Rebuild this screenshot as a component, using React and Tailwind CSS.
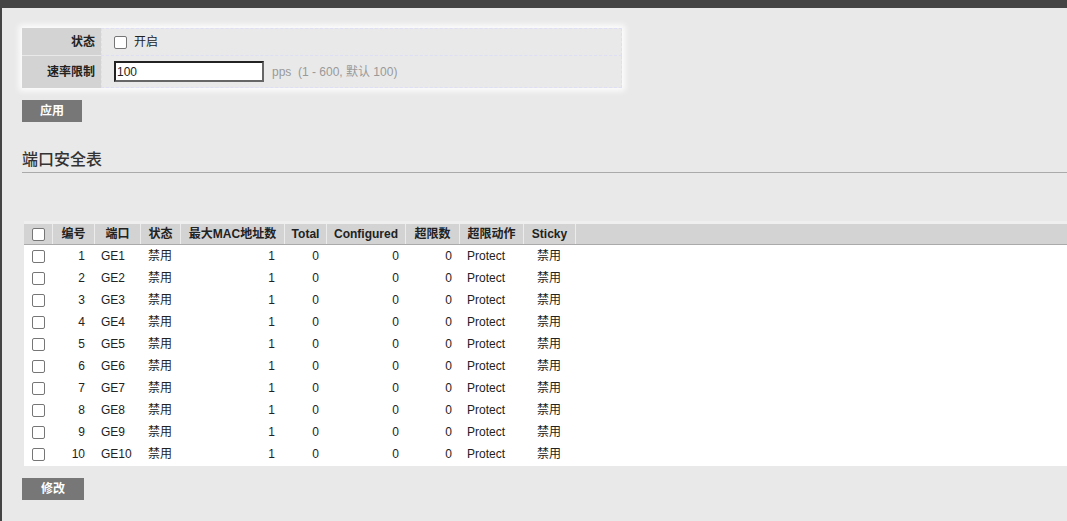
const ROWS = Array.from({ length: 10 }, (_, i) => i + 1);

const COLS = [
  { key: 'chk', w: 'w-[28px]' },
  { key: '编号', w: 'w-[42px]' },
  { key: '端口', w: 'w-[46px]' },
  { key: '状态', w: 'w-[40px]' },
  { key: '最大MAC地址数', w: 'w-[104px]' },
  { key: 'Total', w: 'w-[42px]' },
  { key: 'Configured', w: 'w-[79px]' },
  { key: '超限数', w: 'w-[54px]' },
  { key: '超限动作', w: 'w-[64px]' },
  { key: 'Sticky', w: 'w-[52px]' },
];

function Box() {
  return <span className="inline-block w-[13px] h-[13px] rounded-[2px] border border-[#767676] bg-white align-middle" />;
}

export default function App() {
  return (
    <div
      className="w-[1067px] h-[521px] bg-[#e9e9e9] border-l-2 border-[#444] text-[12px] text-[#222] overflow-hidden"
      style={{ fontFamily: '"Liberation Sans", Arial, "Noto Sans CJK SC", sans-serif' }}
    >
      <div className="h-[8px] bg-[#444] -ml-[2px]" />

      {/* 设置 */}
      <div className="pl-[20px] pt-[20px]">
        <div className="w-[600px] shadow-[0_0_6px_3px_rgba(255,255,255,0.9)]">
          <div className="flex h-[28px]">
            <div className="w-[79px] bg-[#d3d3d3] font-bold flex items-center justify-end pr-[6px] border-b border-[#e9e9e9]">状态</div>
            <div className="flex-1 flex items-center pl-[12px] gap-[7px] border border-dashed border-[#dedef6]">
              <Box />
              <span>开启</span>
            </div>
          </div>
          <div className="flex h-[32px]">
            <div className="w-[79px] bg-[#d3d3d3] font-bold flex items-center justify-end pr-[6px]">速率限制</div>
            <div className="flex-1 flex items-center pl-[12px] border border-t-0 border-dashed border-[#dedef6]">
              <div className="w-[150px] h-[21px] bg-white border-2 border-t-[#222] border-l-[#222] border-r-[#666] border-b-[#666] flex items-center pl-[1px]">100</div>
              <span className="ml-[8px] text-[#999]">pps&nbsp;&nbsp;(1 - 600, 默认 100)</span>
            </div>
          </div>
        </div>

        <button className="mt-[12px] w-[60px] h-[22px] bg-[#777] text-white font-bold text-[12px]">应用</button>

        <div className="mt-[28px] text-[16px] text-[#333] leading-[20px] font-medium">端口安全表</div>
        <div className="mt-[2px] border-b border-[#aaa]" />

        {/* 表格 */}
        <div className="mt-[48px] ml-[2px]">
          <div className="flex h-[24px] bg-[#d3d3d3] border-t-[3px] border-[#efefef] border-b border-b-[#aaa] font-bold">
            {COLS.map((c, i) => (
              <div
                key={c.key}
                className={`${c.w} shrink-0 flex items-center justify-center ${i > 0 ? 'border-l border-[#ececec]' : ''}`}
              >
                {c.key === 'chk' ? <Box /> : c.key}
              </div>
            ))}
            <div className="flex-1 border-l border-[#ececec]" />
          </div>
          <div className="bg-white pb-[1px]">
            {ROWS.map((n) => (
              <div key={n} className="flex h-[22px] items-center">
                <div className="w-[28px] flex justify-center"><Box /></div>
                <div className="w-[42px] text-right pr-[9px]">{n}</div>
                <div className="w-[46px] pl-[7px]">GE{n}</div>
                <div className="w-[40px] pl-[8px]">禁用</div>
                <div className="w-[104px] text-right pr-[9px]">1</div>
                <div className="w-[42px] text-right pr-[7px]">0</div>
                <div className="w-[79px] text-right pr-[6px]">0</div>
                <div className="w-[54px] text-right pr-[7px]">0</div>
                <div className="w-[64px] pl-[8px]">Protect</div>
                <div className="w-[52px] text-center">禁用</div>
              </div>
            ))}
          </div>
        </div>

        <button className="mt-[12px] w-[62px] h-[22px] bg-[#777] text-white font-bold text-[12px]">修改</button>
      </div>
    </div>
  );
}
